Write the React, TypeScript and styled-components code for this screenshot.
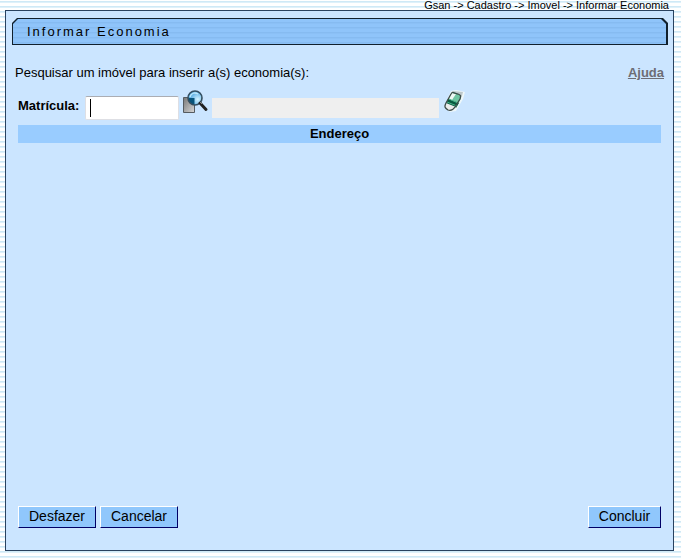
import React from "react";
import styled, { createGlobalStyle } from "styled-components";

const GlobalStyle = createGlobalStyle`
  * { box-sizing: border-box; }
  body {
    margin: 0;
    color: #000;
    font-family: "Liberation Sans", Arial, sans-serif;
    font-size: 13px;
    background: repeating-linear-gradient(#ffffff 0 1px, #cfe9f6 1px 2px, #dff1fa 2px 3px, #ffffff 3px 5px);
  }
`;

const Page = styled.div`
  display: flex;
  flex-direction: column;
  min-height: 100vh;
  padding: 0 7px 8px 5px;
`;

const Breadcrumb = styled.nav`
  height: 10px;
  padding-right: 5px;
  font-size: 11px;
  line-height: 10px;
  text-align: right;
  white-space: nowrap;
`;

const Panel = styled.main`
  display: flex;
  flex: 1;
  flex-direction: column;
  padding: 7px 5px 22px 6px;
  border: 1px solid #29425f;
  background: #cbe5ff;
`;

const TitleFrame = styled.header`
  padding: 1px 2px 1px 1px;
  background: #10202d;
  clip-path: polygon(5px 0, calc(100% - 5px) 0, 100% 5px, 100% 100%, 0 100%, 0 5px);
`;

const Title = styled.h1`
  height: 25px;
  margin: 0;
  padding-left: 14px;
  font-size: 13px;
  font-weight: 400;
  line-height: 25px;
  letter-spacing: 2px;
  background: repeating-linear-gradient(#8fc4fa 0 3px, #86bbf1 3px 4px, #8bc0f6 4px 5px);
  clip-path: polygon(5px 0, calc(100% - 5px) 0, 100% 5px, 100% 100%, 0 100%, 0 5px);
`;

const Intro = styled.div`
  display: flex;
  justify-content: space-between;
  margin-top: 19px;
  padding: 0 4px 0 3px;
  line-height: 18px;
`;

const HelpLink = styled.a`
  color: #6d6d75;
  font-weight: 700;
`;

const SearchRow = styled.div`
  display: flex;
  align-items: flex-start;
  height: 35px;
  margin-top: 8px;
  padding-left: 6px;
`;

const Label = styled.label`
  width: 67px;
  padding-top: 8px;
  font-weight: 700;
  line-height: 15px;
`;

const CodeInput = styled.input`
  width: 94px;
  height: 24px;
  margin-top: 6px;
  padding: 2px 4px;
  border: 1px solid #dedfe4;
  border-top-color: #abadb3;
  border-radius: 2px;
  outline: 0;
  background: #fff;
  caret-color: transparent;
  font: 16px "Liberation Sans", Arial, sans-serif;

  &:focus {
    background: linear-gradient(#000, #000) 4px 2px / 1px 18px no-repeat #fff;
  }
`;

const ResultInput = styled.input`
  width: 227px;
  height: 20px;
  margin-top: 8px;
  padding: 0 2px;
  border: 0;
  background: #efefef;
  font: 13px "Liberation Sans", Arial, sans-serif;
`;

const IconButton = styled.button<{ $inset: number }>`
  display: block;
  width: 33px;
  height: 26px;
  padding: 0 0 0 ${({ $inset }) => $inset}px;
  border: 0;
  background: transparent;
  svg { display: block; }
`;

const Address = styled.table`
  width: calc(100% - 13px);
  margin-left: 6px;
  border-collapse: collapse;
  th {
    height: 18px;
    padding: 0;
    background: #99ccff;
    line-height: 18px;
  }
`;

const Actions = styled.footer`
  display: flex;
  gap: 4px;
  margin-top: auto;
  padding: 0 7px 0 6px;
`;

const ActionButton = styled.button<{ $width: number; $end?: boolean }>`
  width: ${({ $width }) => $width}px;
  height: 22px;
  margin-left: ${({ $end }) => ($end ? "auto" : "0")};
  padding: 0 0 2px;
  border: 1px solid;
  border-color: #fff #000066 #000066 #fff;
  background: #90c7fc;
  color: #000;
  font: 14px/18px "Liberation Sans", Arial, sans-serif;
`;

function SearchIcon() {
  return (
    <svg width="27" height="26" viewBox="0 0 27 26" aria-hidden="true">
      <defs>
        <linearGradient id="box" x2="1" y2="1">
          <stop stopColor="#777" />
          <stop offset="1" stopColor="#d7d7d7" />
        </linearGradient>
        <radialGradient id="lens" cx=".7" cy=".6">
          <stop stopColor="#d4f3ff" />
          <stop offset="1" stopColor="#65b4e5" />
        </radialGradient>
      </defs>
      <path d="M1.5 7.5h11v15h-11z" fill="url(#box)" stroke="#555b60" />
      <circle cx="13" cy="8" r="7" fill="url(#lens)" />
      <path d="M6.5 8h6v6.5c-3.500 0-6-2.500-6-6.500" fill="#08547a" />
      <circle cx="13" cy="8" r="7" fill="none" stroke="#344e5f" strokeWidth="1.6" />
      <path d="M8 7c1-4 5-5 8-3" fill="none" stroke="#bfe9fb" strokeWidth="1.3" />
      <path d="m18 13 6 6.5" stroke="#222" strokeWidth="3" strokeLinecap="round" />
      <path d="m18 12 2 2" stroke="#888" strokeWidth="1" />
    </svg>
  );
}

function EraserIcon() {
  return (
    <svg width="24" height="26" viewBox="0 0 24 26" aria-hidden="true">
      <path d="m7 1 5-1 9 2-2 7-7 12-6 1-5-5 2-7z" fill="#edf7fa" />
      <path d="m9 1 10 1-1 4-4 3-6-5z" fill="#bdc8ca" />
      <path d="m7 4 3-2 6 3c2 1 1 3 0 5l-3 6-10-5z" fill="#70c5a1" />
      <path d="m8 3 4 1-4 6-4-1z" fill="#eff8f3" />
      <path d="m4 9 11 4-3 5-10-4z" fill="#075b40" />
      <path d="m3 12 10 4M5 9l9 4" stroke="#4bb38c" strokeWidth="1" />
      <path d="m2 13 10 4c-2 4-5 5-8 3-3-1-4-3-2-7z" fill="#ececec" />
      <path d="m7 4-5 9c-2 4-1 5 2 7 3 1 5 0 7-3l5-8c1-3 1-4-2-5l-4-1c-1-1-2-1-3 1z" fill="none" stroke="#3d4b48" strokeWidth="1.3" />
    </svg>
  );
}

export default function App() {
  return (
    <>
      <GlobalStyle />
      <Page>
        <Breadcrumb>Gsan -&gt; Cadastro -&gt; Imovel -&gt; Informar Economia</Breadcrumb>
        <Panel>
          <TitleFrame>
            <Title>Informar Economia</Title>
          </TitleFrame>
          <Intro>
            <span>Pesquisar um imóvel para inserir a(s) economia(s):</span>
            <HelpLink href="#ajuda">Ajuda</HelpLink>
          </Intro>
          <SearchRow>
            <Label htmlFor="matricula">Matrícula:</Label>
            <CodeInput id="matricula" autoFocus />
            <IconButton type="button" $inset={3} aria-label="Pesquisar imóvel">
              <SearchIcon />
            </IconButton>
            <ResultInput readOnly aria-label="Inscrição do imóvel" />
            <IconButton type="button" $inset={5} aria-label="Limpar imóvel">
              <EraserIcon />
            </IconButton>
          </SearchRow>
          <Address>
            <thead>
              <tr>
                <th scope="col">Endereço</th>
              </tr>
            </thead>
          </Address>
          <Actions>
            <ActionButton type="button" $width={78}>Desfazer</ActionButton>
            <ActionButton type="button" $width={78}>Cancelar</ActionButton>
            <ActionButton type="button" $width={73} $end>Concluir</ActionButton>
          </Actions>
        </Panel>
      </Page>
    </>
  );
}
